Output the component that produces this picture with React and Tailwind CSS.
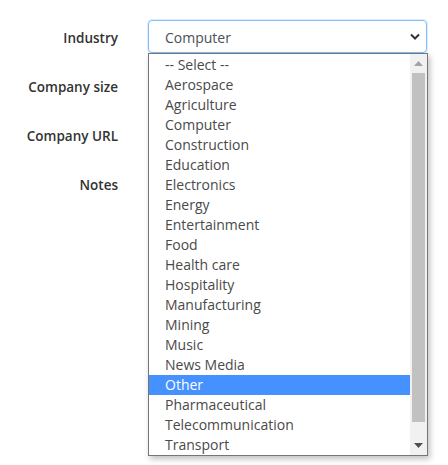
import { useState } from 'react';

const industries = [
  '-- Select --',
  'Aerospace',
  'Agriculture',
  'Computer',
  'Construction',
  'Education',
  'Electronics',
  'Energy',
  'Entertainment',
  'Food',
  'Health care',
  'Hospitality',
  'Manufacturing',
  'Mining',
  'Music',
  'News Media',
  'Other',
  'Pharmaceutical',
  'Telecommunication',
  'Transport',
];

const Field = ({ label, children }) => (
  <div className="flex items-center mb-4">
    <label className="w-[118px] shrink-0 pt-[3px] text-right text-[13.5px] font-semibold text-[#333]">{label}</label>
    <div className="ml-[30px] w-[279px]">{children}</div>
  </div>
);

const App = () => {
  const [hovered, setHovered] = useState('Other');

  return (
    <div className="relative w-[448px] h-[465px] bg-white pt-5" style={{ fontFamily: '"Open Sans", sans-serif' }}>
      <Field label="Industry">
        <div className="h-[33px] flex items-center justify-between rounded border border-[#80bdff] shadow-[0_0_0_1px_rgba(128,189,255,0.25)] pl-4 pr-[6px] text-[14px] text-[#495057]">
          <span className="pt-px">Computer</span>
          <svg className="w-[10px] h-[7px]" viewBox="0 0 10 7" fill="none" stroke="#333" strokeWidth={2}>
            <path d="M1 1.5l4 4 4-4" />
          </svg>
        </div>
      </Field>
      <Field label="Company size">
        <div className="h-[33px] rounded border border-[#ced4da]" />
      </Field>
      <Field label="Company URL">
        <div className="h-[33px] rounded border border-[#ced4da]" />
      </Field>
      <Field label="Notes">
        <div className="h-[33px] rounded border border-[#ced4da]" />
      </Field>

      {/* open option list */}
      <div className="absolute left-[148px] top-[53px] w-[280px] h-[403px] flex border border-[#767676] bg-white shadow-[2px_3px_6px_rgba(0,0,0,0.25)]">
        <ul className="flex-1 pt-px">
          {industries.map((name) => (
            <li
              key={name}
              onMouseEnter={() => setHovered(name)}
              className={`h-5 leading-5 pl-4 text-[14px] ${hovered === name ? 'bg-[#4591ff] text-white' : 'text-[#4a4a4a]'}`}
            >
              {name}
            </li>
          ))}
        </ul>
        <div className="w-[17px] bg-[#f1f1f1] flex flex-col items-center">
          <div className="h-[19px] flex items-center justify-center">
            <svg className="w-[9px] h-[5px]" viewBox="0 0 9 5" fill="#a3a3a3">
              <path d="M0 5l4.5-5L9 5z" />
            </svg>
          </div>
          <div className="w-[13px] h-[349px] bg-[#c1c1c1]" />
          <div className="flex-1" />
          <div className="h-[19px] flex items-center justify-center">
            <svg className="w-[9px] h-[5px]" viewBox="0 0 9 5" fill="#505050">
              <path d="M0 0l4.5 5L9 0z" />
            </svg>
          </div>
        </div>
      </div>
    </div>
  );
};

export default App;
